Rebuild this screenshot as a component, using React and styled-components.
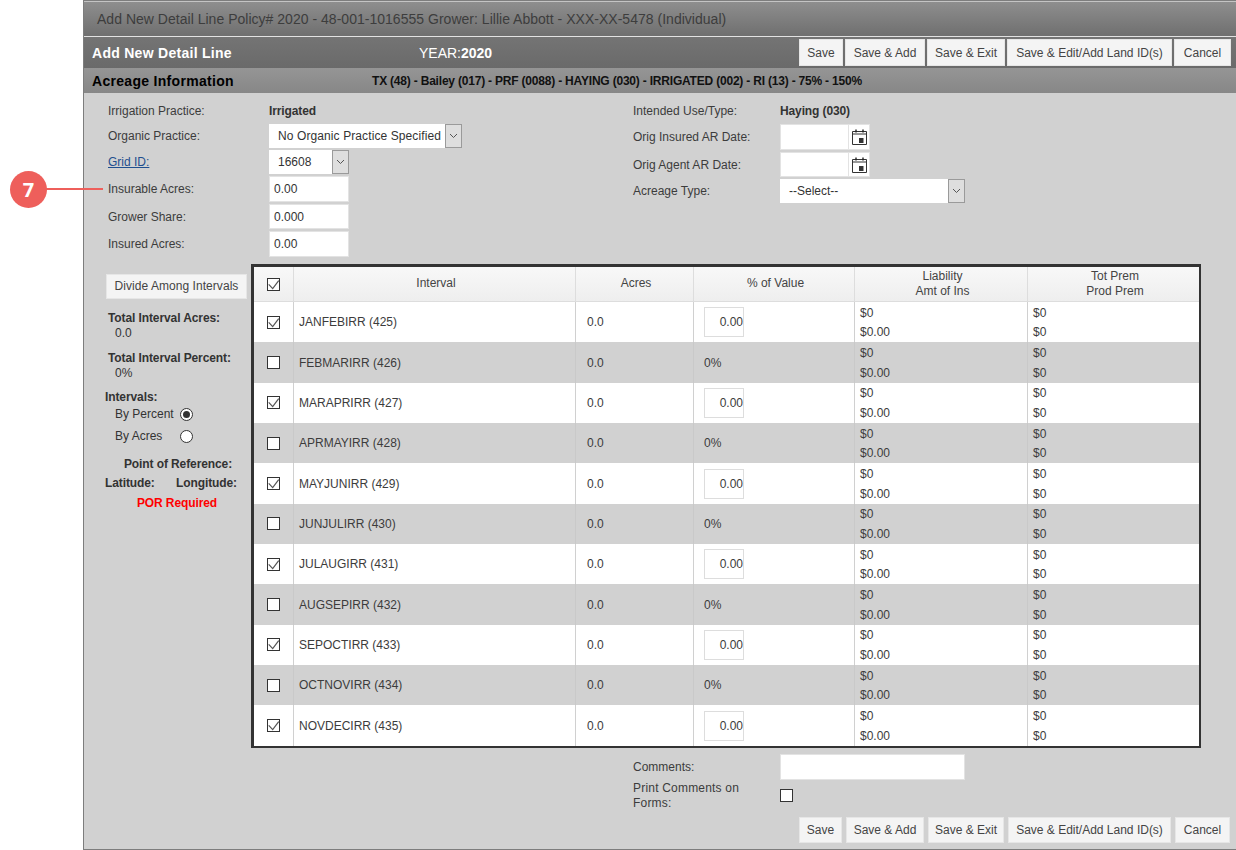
import React from "react";
import styled, { createGlobalStyle } from "styled-components";

const GlobalStyle = createGlobalStyle`
  html, body {
    margin: 0;
    padding: 0;
    background: #fff;
    font-family: "Liberation Sans", Arial, sans-serif;
    font-size: 12px;
    color: #333;
  }
`;

const Page = styled.div`
  position: relative;
  width: 1236px;
  height: 850px;
  padding-left: 83px;
  box-sizing: border-box;
  overflow: hidden;
`;

const Callout = styled.div`
  position: absolute;
  left: 10px;
  top: 171px;
  width: 37px;
  height: 37px;
  border-radius: 50%;
  background: #ee5f5b;
  color: #fff;
  font: bold 20px "Open Sans", sans-serif;
  display: flex;
  align-items: center;
  justify-content: center;

  &::after {
    content: "";
    position: absolute;
    left: 36px;
    top: 17px;
    width: 57px;
    height: 2px;
    background: #ee5f5b;
  }
`;

const Panel = styled.div`
  width: 1153px;
  height: 850px;
  box-sizing: border-box;
  border: 1px solid #7d7d7d;
  border-right: none;
  background: #d1d1d1;
  display: flex;
  flex-direction: column;
`;

const TitleBar = styled.div`
  height: 34px;
  border-top: 1px solid #c4c4c4;
  border-bottom: 1px solid #e2e2e2;
  background: linear-gradient(#8e8e8e, #6f6f6f);
  color: #3d3d3d;
  font-size: 14px;
  letter-spacing: 0.02px;
  line-height: 35px;
  padding-left: 13px;
`;

const HeadBar = styled.div`
  height: 31px;
  background: linear-gradient(#747474, #6a6a6a);
  color: #fff;
  display: flex;
  align-items: center;
  padding-left: 8px;
`;

const HeadTitle = styled.div`
  width: 327px;
  font-size: 14px;
  font-weight: bold;
  letter-spacing: 0.28px;
`;

const Year = styled.div`
  font-size: 14px;
  b {
    font-weight: bold;
  }
`;

const Buttons = styled.div`
  margin-left: auto;
  display: flex;
  gap: ${(p) => p.$gap}px;
  padding-right: ${(p) => p.$right}px;
  margin-top: ${(p) => p.$top || 0}px;
`;

const Button = styled.button`
  width: ${(p) => p.$width}px;
  height: ${(p) => p.$height}px;
  padding: 0;
  border: 1px solid #e6e6e6;
  background: #f4f4f4;
  color: #444;
  font-family: inherit;
  font-size: 12px;
`;

const SubBar = styled.div`
  height: 25px;
  background: linear-gradient(#959595, #878787);
  color: #000;
  display: flex;
  align-items: center;
  padding-left: 8px;
`;

const SubTitle = styled.div`
  width: 280px;
  font-size: 14px;
  font-weight: bold;
  letter-spacing: 0.3px;
`;

const SubInfo = styled.div`
  font-size: 12px;
  font-weight: bold;
  letter-spacing: -0.2px;
  color: #111;
`;

const Form = styled.div`
  display: flex;
  padding: 7px 0 0 24px;
  height: 164px;
  box-sizing: border-box;
`;

const FieldColumn = styled.div`
  width: ${(p) => p.$width}px;
  display: flex;
  flex-direction: column;
  gap: 2px;
`;

const FieldRow = styled.div`
  display: flex;
  align-items: center;
  min-height: ${(p) => p.$height || 22}px;
`;

const Label = styled.div`
  width: ${(p) => p.$width}px;
  flex-shrink: 0;
  color: #3c3c3c;
`;

const LinkLabel = styled.a`
  color: #1f4f8f;
  text-decoration: underline;
`;

const Strong = styled.div`
  font-weight: bold;
  letter-spacing: -0.12px;
  color: #333;
`;

const TextBox = styled.div`
  width: ${(p) => p.$width}px;
  height: ${(p) => p.$height || 26}px;
  box-sizing: border-box;
  background: #fff;
  border: 1px solid #e3e3e3;
  padding-left: 4px;
  line-height: 24px;
`;

const SelectBox = styled.div`
  width: ${(p) => p.$width}px;
  height: 24px;
  box-sizing: border-box;
  background: #fff;
  display: flex;
  align-items: center;
  padding-left: 9px;
  letter-spacing: ${(p) => p.$spacing || 0}px;
  position: relative;
`;

const SelectArrow = styled.span`
  position: absolute;
  right: 0;
  top: 0;
  width: 17px;
  height: 24px;
  box-sizing: border-box;
  border: 1px solid #9a9a9a;
  background: #dedede;
  display: flex;
  align-items: center;
  justify-content: center;
`;

const DateBox = styled.div`
  width: 90px;
  height: ${(p) => p.$height}px;
  box-sizing: border-box;
  background: #fff;
  display: flex;
  justify-content: flex-end;
  border: 1px solid #e3e3e3;
`;

const DateIcon = styled.span`
  width: 20px;
  border-left: 1px solid #e3e3e3;
  display: flex;
  align-items: center;
  justify-content: center;
`;

const Main = styled.div`
  display: flex;
  padding-left: 21px;
  margin-top: 7px;
`;

const Side = styled.div`
  width: 146px;
  flex-shrink: 0;
  padding-top: 10px;
`;

const SideButton = styled.button`
  width: 141px;
  height: 25px;
  margin-left: 1px;
  display: block;
  border: 1px solid #e6e6e6;
  background: #f4f4f4;
  color: #444;
  font-family: inherit;
  font-size: 12px;
  letter-spacing: 0.05px;
  padding: 0 0 2px;
`;

const Stat = styled.div`
  padding-left: 3px;
  height: 39.5px;
  line-height: 15px;
  &:first-of-type {
    margin-top: 12px;
  }
  b {
    display: block;
    font-weight: bold;
    letter-spacing: -0.1px;
  }
  span {
    padding-left: 7px;
  }
`;

const SideHeading = styled.div`
  font-weight: bold;
  letter-spacing: -0.1px;
  line-height: 15px;
  height: 13px;
`;

const RadioRow = styled.div`
  display: flex;
  align-items: center;
  height: 22px;
  padding-left: 10px;
`;

const RadioLabel = styled.span`
  width: 65px;
`;

const Radio = styled.span`
  width: 13px;
  height: 13px;
  box-sizing: border-box;
  border-radius: 50%;
  border: 1px solid #333;
  background: #fff;
  display: flex;
  align-items: center;
  justify-content: center;
  &::after {
    content: "";
    display: ${(p) => (p.$on ? "block" : "none")};
    width: 7px;
    height: 7px;
    border-radius: 50%;
    background: #333;
  }
`;

const PointTitle = styled.div`
  font-weight: bold;
  letter-spacing: -0.1px;
  text-align: center;
  padding-top: 10px;
  width: 146px;
  line-height: 15px;
`;

const LatLong = styled.div`
  display: flex;
  justify-content: space-between;
  font-weight: bold;
  letter-spacing: -0.1px;
  width: 132px;
  margin-top: 4px;
  line-height: 15px;
`;

const PorRequired = styled.div`
  color: #f00;
  font-weight: bold;
  letter-spacing: -0.1px;
  text-align: center;
  width: 144px;
  margin-top: 5px;
  line-height: 15px;
`;

const Table = styled.div`
  width: 950px;
  height: 484px;
  box-sizing: border-box;
  border: 3px solid #333;
  border-right-width: 2px;
  background: #fff;
`;

const gridColumns = "40px 282px 118px 161px 173px 1fr";

const HeaderRow = styled.div`
  display: grid;
  grid-template-columns: ${gridColumns};
  height: 35px;
  box-sizing: border-box;
  border-bottom: 1px solid #ddd;
  background: linear-gradient(#f8f8f8, #eeeeee);
`;

const HeaderCell = styled.div`
  border-right: 1px solid #ddd;
  display: flex;
  align-items: center;
  justify-content: center;
  text-align: center;
  line-height: 15px;
  color: #444;
  padding-left: ${(p) => (p.$box ? 0 : 3)}px;
  padding-bottom: ${(p) => (p.$single ? 2 : 0)}px;
  &:last-child {
    border-right: none;
  }
`;

const Row = styled.div`
  display: grid;
  grid-template-columns: ${gridColumns};
  height: 40.35px;
  background: ${(p) => (p.$shaded ? "#d1d1d1" : "#fff")};
`;

const Cell = styled.div`
  border-right: 1px solid ${(p) => (p.$shaded ? "#c9c9c9" : "#d0d0d0")};
  display: flex;
  align-items: center;
  justify-content: ${(p) => (p.$center ? "center" : "flex-start")};
  padding-left: ${(p) => (p.$center ? 0 : p.$pad || 5)}px;
  color: #3c3c3c;
  &:last-child {
    border-right: none;
  }
`;

const MoneyCell = styled.div`
  border-right: 1px solid ${(p) => (p.$shaded ? "#c9c9c9" : "#d0d0d0")};
  display: flex;
  flex-direction: column;
  justify-content: center;
  gap: 5px;
  padding: 1px 0 0 5px;
  line-height: 14.5px;
  color: #3c3c3c;
  &:last-child {
    border-right: none;
  }
`;

const PercentInput = styled.div`
  width: 40px;
  height: 30px;
  box-sizing: border-box;
  border: 1px solid #ddd;
  background: #fff;
  text-align: right;
  line-height: 28px;
`;

const CheckBox = styled.span`
  width: 13px;
  height: 13px;
  box-sizing: border-box;
  border: 1px solid #333;
  background: #fff;
  display: block;
  flex-shrink: 0;

  svg {
    display: block;
  }
`;

const PrintCheck = styled(CheckBox)`
  margin-bottom: 2px;
`;

const CommentArea = styled.div`
  padding-left: 549px;
  margin-top: 6px;
  display: flex;
  flex-direction: column;
  gap: 1px;
`;

const PrintLabel = styled.div`
  width: 147px;
  box-sizing: border-box;
  padding-right: 20px;
  flex-shrink: 0;
  line-height: 15px;
  letter-spacing: 0.2px;
  color: #3c3c3c;
`;

const topButtons = [
  ["Save", 44],
  ["Save & Add", 80],
  ["Save & Exit", 78],
  ["Save & Edit/Add Land ID(s)", 165],
  ["Cancel", 57],
];

const footButtons = [
  ["Save", 43],
  ["Save & Add", 78],
  ["Save & Exit", 76],
  ["Save & Edit/Add Land ID(s)", 163],
  ["Cancel", 55],
];

const intervals = [
  "JANFEBIRR (425)",
  "FEBMARIRR (426)",
  "MARAPRIRR (427)",
  "APRMAYIRR (428)",
  "MAYJUNIRR (429)",
  "JUNJULIRR (430)",
  "JULAUGIRR (431)",
  "AUGSEPIRR (432)",
  "SEPOCTIRR (433)",
  "OCTNOVIRR (434)",
  "NOVDECIRR (435)",
];

function Chevron() {
  return (
    <svg width="9" height="6" viewBox="0 0 9 6" fill="none">
      <path d="M1 1l3.5 3.5L8 1" stroke="#555" strokeWidth="1" />
    </svg>
  );
}

function CalendarIcon() {
  return (
    <svg width="15" height="16" viewBox="0 0 15 16" fill="none">
      <path d="M.5 2.5h14v13H.5z" fill="#fff" stroke="#333" />
      <path d="M1 5h13" stroke="#333" />
      <path d="M4 .5v3M11 .5v3" stroke="#222" strokeWidth="1.4" />
      <path d="M7 9h4.5v5H7z" fill="#333" />
    </svg>
  );
}

function Check({ checked }) {
  return (
    <CheckBox>
      {checked && (
        <svg width="11" height="11" viewBox="0 0 11 11" fill="none">
          <path d="M.7 5.3l4 4.3 6-8" stroke="#555" strokeWidth="1.2" />
        </svg>
      )}
    </CheckBox>
  );
}

function ActionButtons({ items, height }) {
  return items.map(([label, width]) => (
    <Button key={label} $width={width} $height={height}>
      {label}
    </Button>
  ));
}

export default function App() {
  return (
    <>
      <GlobalStyle />
      <Page>
        <Callout>7</Callout>
        <Panel>
          <TitleBar>Add New Detail Line Policy# 2020 - 48-001-1016555 Grower: Lillie Abbott - XXX-XX-5478 (Individual)</TitleBar>
          <HeadBar>
            <HeadTitle>Add New Detail Line</HeadTitle>
            <Year>
              YEAR:<b>2020</b>
            </Year>
            <Buttons $gap={2} $right={5}>
              <ActionButtons items={topButtons} height={27} />
            </Buttons>
          </HeadBar>
          <SubBar>
            <SubTitle>Acreage Information</SubTitle>
            <SubInfo>TX (48) - Bailey (017) - PRF (0088) - HAYING (030) - IRRIGATED (002) - RI (13) - 75% - 150%</SubInfo>
          </SubBar>
          <Form>
            <FieldColumn $width={525}>
              <FieldRow>
                <Label $width={161}>Irrigation Practice:</Label>
                <Strong>Irrigated</Strong>
              </FieldRow>
              <FieldRow $height={24}>
                <Label $width={161}>Organic Practice:</Label>
                <SelectBox $width={193} $spacing={0.1}>
                  No Organic Practice Specified
                  <SelectArrow>
                    <Chevron />
                  </SelectArrow>
                </SelectBox>
              </FieldRow>
              <FieldRow $height={24}>
                <Label $width={161}>
                  <LinkLabel>Grid ID:</LinkLabel>
                </Label>
                <SelectBox $width={80}>
                  16608
                  <SelectArrow>
                    <Chevron />
                  </SelectArrow>
                </SelectBox>
              </FieldRow>
              <FieldRow $height={26}>
                <Label $width={161}>Insurable Acres:</Label>
                <TextBox $width={80}>0.00</TextBox>
              </FieldRow>
              <FieldRow $height={25}>
                <Label $width={161}>Grower Share:</Label>
                <TextBox $width={80} $height={25}>
                  0.000
                </TextBox>
              </FieldRow>
              <FieldRow $height={26}>
                <Label $width={161}>Insured Acres:</Label>
                <TextBox $width={80}>0.00</TextBox>
              </FieldRow>
            </FieldColumn>
            <FieldColumn $width={400}>
              <FieldRow>
                <Label $width={147}>Intended Use/Type:</Label>
                <Strong>Haying (030)</Strong>
              </FieldRow>
              <FieldRow $height={26}>
                <Label $width={147}>Orig Insured AR Date:</Label>
                <DateBox $height={26}>
                  <DateIcon>
                    <CalendarIcon />
                  </DateIcon>
                </DateBox>
              </FieldRow>
              <FieldRow $height={25}>
                <Label $width={147}>Orig Agent AR Date:</Label>
                <DateBox $height={25}>
                  <DateIcon>
                    <CalendarIcon />
                  </DateIcon>
                </DateBox>
              </FieldRow>
              <FieldRow $height={24}>
                <Label $width={147}>Acreage Type:</Label>
                <SelectBox $width={185}>
                  --Select--
                  <SelectArrow>
                    <Chevron />
                  </SelectArrow>
                </SelectBox>
              </FieldRow>
            </FieldColumn>
          </Form>
          <Main>
            <Side>
              <SideButton>Divide Among Intervals</SideButton>
              <Stat>
                <b>Total Interval Acres:</b>
                <span>0.0</span>
              </Stat>
              <Stat>
                <b>Total Interval Percent:</b>
                <span>0%</span>
              </Stat>
              <SideHeading>Intervals:</SideHeading>
              <RadioRow>
                <RadioLabel>By Percent</RadioLabel>
                <Radio $on />
              </RadioRow>
              <RadioRow>
                <RadioLabel>By Acres</RadioLabel>
                <Radio />
              </RadioRow>
              <PointTitle>Point of Reference:</PointTitle>
              <LatLong>
                <span>Latitude:</span>
                <span>Longitude:</span>
              </LatLong>
              <PorRequired>POR Required</PorRequired>
            </Side>
            <Table>
              <HeaderRow>
                <HeaderCell $box>
                  <Check checked />
                </HeaderCell>
                <HeaderCell $single>Interval</HeaderCell>
                <HeaderCell $single>Acres</HeaderCell>
                <HeaderCell $single>% of Value</HeaderCell>
                <HeaderCell>
                  Liability
                  <br />
                  Amt of Ins
                </HeaderCell>
                <HeaderCell>
                  Tot Prem
                  <br />
                  Prod Prem
                </HeaderCell>
              </HeaderRow>
              {intervals.map((name, i) => {
                const shaded = i % 2 === 1;
                return (
                  <Row key={name} $shaded={shaded}>
                    <Cell $center $shaded={shaded}>
                      <Check checked={!shaded} />
                    </Cell>
                    <Cell $shaded={shaded}>{name}</Cell>
                    <Cell $pad={11} $shaded={shaded}>
                      0.0
                    </Cell>
                    <Cell $pad={10} $shaded={shaded}>
                      {shaded ? "0%" : <PercentInput>0.00</PercentInput>}
                    </Cell>
                    <MoneyCell $shaded={shaded}>
                      <span>$0</span>
                      <span>$0.00</span>
                    </MoneyCell>
                    <MoneyCell $shaded={shaded}>
                      <span>$0</span>
                      <span>$0</span>
                    </MoneyCell>
                  </Row>
                );
              })}
            </Table>
          </Main>
          <CommentArea>
            <FieldRow $height={26}>
              <Label $width={147}>Comments:</Label>
              <TextBox $width={185} />
            </FieldRow>
            <FieldRow>
              <PrintLabel>Print Comments on Forms:</PrintLabel>
              <PrintCheck />
            </FieldRow>
          </CommentArea>
          <Buttons $gap={4} $right={6} $top={6}>
            <ActionButtons items={footButtons} height={26} />
          </Buttons>
        </Panel>
      </Page>
    </>
  );
}
